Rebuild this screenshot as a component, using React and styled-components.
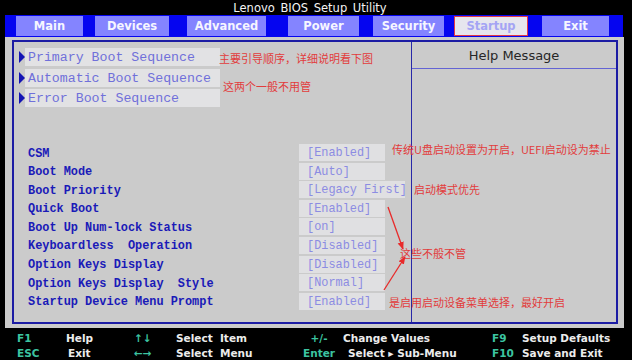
import React from "react";
import styled, { createGlobalStyle } from "styled-components";

const GlobalStyle = createGlobalStyle`
  html, body {
    margin: 0;
    padding: 0;
    background: #000;
  }
`;

const Screen = styled.div`
  position: relative;
  width: 632px;
  height: 360px;
  background: #000;
  display: flex;
  flex-direction: column;
  overflow: hidden;
`;

const TitleBar = styled.div`
  height: 15px;
  line-height: 17px;
  text-align: center;
  padding-right: 12px;
  color: #f4f4f4;
  font-family: "DejaVu Sans", sans-serif;
  font-size: 11.5px;
  word-spacing: 2px;
`;

const TabBar = styled.div`
  display: flex;
  height: 22px;
  margin: 0 9px 0 5px;
  padding: 1px 0 1px 11px;
  box-sizing: border-box;
  background: #0505f0;
`;

const Tab = styled.div`
  width: ${(p) => p.w}px;
  margin-left: ${(p) => p.ml}px;
  box-sizing: border-box;
  display: flex;
  align-items: center;
  justify-content: center;
  background: ${(p) => (p.active ? "#e6e6ee" : "#8484ff")};
  border: 1px solid ${(p) => (p.active ? "#e23848" : "#8484ff")};
  color: ${(p) => (p.active ? "#a4a4f4" : "#f6f6ff")};
  font-family: "DejaVu Sans", sans-serif;
  font-weight: bold;
  font-size: 11.5px;
`;

const MainPanel = styled.div`
  height: 291px;
  margin: 0 8px 0 5px;
  padding: 3px 6px 4px 7px;
  box-sizing: border-box;
  background: #cbcbcb;
`;

const Frame = styled.div`
  height: 100%;
  box-sizing: border-box;
  border: 2px solid #1c1ca4;
  display: grid;
  grid-template-columns: 398px 1fr;
`;

const LeftPane = styled.div`
  border-right: 1px solid #2828a8;
  padding: 6px 0 0 5px;
`;

const RightPane = styled.div`
  display: flex;
  flex-direction: column;
`;

const HelpHeader = styled.div`
  height: 26px;
  border-bottom: 1px solid #6464d4;
  display: flex;
  align-items: center;
  justify-content: center;
  color: #262626;
  font-family: "DejaVu Sans", sans-serif;
  font-size: 13px;
`;

const SubMenuList = styled.div`
  display: flex;
  flex-direction: column;
  gap: 2.5px;
`;

const SubMenuRow = styled.div`
  display: flex;
  align-items: center;
  height: 18px;
`;

const Pointer = styled.span`
  width: 0;
  height: 0;
  border-top: 6px solid transparent;
  border-bottom: 6px solid transparent;
  border-left: 6px solid #1414b4;
`;

const SubMenuLabel = styled.div`
  width: 195px;
  height: 18px;
  box-sizing: border-box;
  padding-left: 3px;
  background: #e2e2e4;
  color: #7070da;
  font-family: "Liberation Mono", monospace;
  font-size: 13.25px;
  line-height: 19px;
  white-space: pre;
`;

const SettingList = styled.div`
  margin-top: 37px;
  padding-left: 9px;
  display: flex;
  flex-direction: column;
  gap: 1.6px;
`;

const SettingRow = styled.div`
  display: grid;
  grid-template-columns: 271px auto;
  align-items: center;
  height: 17px;
  font-family: "Liberation Mono", monospace;
  font-size: 11.9px;
  white-space: pre;
`;

const SettingLabel = styled.div`
  color: #1a1ab8;
  font-weight: bold;
  padding-top: 2px;
`;

const SettingValue = styled.div`
  width: ${(p) => p.w}px;
  height: 17px;
  box-sizing: border-box;
  padding: 2px 0 0 8px;
  background: #e0e0e2;
  color: #8c8ce2;
`;

const Footer = styled.div`
  flex: 1;
  padding: 2px 0 0 17px;
  display: grid;
  grid-template-columns: 49px 68px 42px 120px 46px 150px 30px 1fr;
  grid-auto-rows: 15px;
  align-items: center;
  font-family: "DejaVu Sans", sans-serif;
  font-weight: bold;
  font-size: 10.5px;
  white-space: pre;
`;

const Key = styled.span`
  color: #3cc4a0;
  text-align: ${(p) => (p.center ? "center" : "left")};
`;

const Desc = styled.span`
  color: #ececec;
  padding-left: ${(p) => p.pl || 0}px;
`;

const Note = styled.div`
  position: absolute;
  left: ${(p) => p.x}px;
  top: ${(p) => p.y}px;
  color: #e23c3c;
  font-family: "Noto Sans CJK SC", sans-serif;
  font-size: 11px;
  line-height: 14px;
  white-space: nowrap;
`;

const ArrowLayer = styled.svg`
  position: absolute;
  left: 0;
  top: 0;
  pointer-events: none;
`;

const tabs = [
  { name: "Main", w: 67, ml: 0 },
  { name: "Devices", w: 74, ml: 12 },
  { name: "Advanced", w: 79, ml: 18 },
  { name: "Power", w: 71, ml: 22 },
  { name: "Security", w: 71, ml: 14 },
  { name: "Startup", w: 74, ml: 10, active: true },
  { name: "Exit", w: 67, ml: 14 },
];

const subMenus = [
  "Primary Boot Sequence",
  "Automatic Boot Sequence",
  "Error Boot Sequence",
];

const settings = [
  ["CSM", "[Enabled]"],
  ["Boot Mode", "[Auto]"],
  ["Boot Priority", "[Legacy First]", 106],
  ["Quick Boot", "[Enabled]"],
  ["Boot Up Num-lock Status", "[on]"],
  ["Keyboardless  Operation", "[Disabled]"],
  ["Option Keys Display", "[Disabled]"],
  ["Option Keys Display  Style", "[Normal]"],
  ["Startup Device Menu Prompt", "[Enabled]"],
];

const notes = [
  { x: 219, y: 51, text: "主要引导顺序，详细说明看下图" },
  { x: 223, y: 79, text: "这两个一般不用管" },
  { x: 392, y: 142, text: "传统U盘启动设置为开启，UEFI启动设为禁止" },
  { x: 414, y: 182, text: "启动模式优先" },
  { x: 400, y: 246, text: "这些不般不管" },
  { x: 389, y: 295, text: "是启用启动设备菜单选择，最好开启" },
];

function App() {
  return (
    <>
      <GlobalStyle />
      <Screen>
        <TitleBar>Lenovo BIOS Setup Utility</TitleBar>

        <TabBar>
          {tabs.map((t) => (
            <Tab key={t.name} w={t.w} ml={t.ml} active={t.active}>
              {t.name}
            </Tab>
          ))}
        </TabBar>

        <MainPanel>
          <Frame>
            <LeftPane>
              <SubMenuList>
                {subMenus.map((s) => (
                  <SubMenuRow key={s}>
                    <Pointer />
                    <SubMenuLabel>{s}</SubMenuLabel>
                  </SubMenuRow>
                ))}
              </SubMenuList>

              <SettingList>
                {settings.map(([label, value, w]) => (
                  <SettingRow key={label}>
                    <SettingLabel>{label}</SettingLabel>
                    <SettingValue w={w || 86}>{value}</SettingValue>
                  </SettingRow>
                ))}
              </SettingList>
            </LeftPane>

            <RightPane>
              <HelpHeader>Help Message</HelpHeader>
            </RightPane>
          </Frame>
        </MainPanel>

        <Footer>
          <Key>F1</Key>
          <Desc>Help</Desc>
          <Key>↑↓</Key>
          <Desc>Select  Item</Desc>
          <Key center>+/-</Key>
          <Desc pl={1}>Change Values</Desc>
          <Key>F9</Key>
          <Desc>Setup Defaults</Desc>

          <Key>ESC</Key>
          <Desc pl={2}>Exit</Desc>
          <Key>←→</Key>
          <Desc>Select  Menu</Desc>
          <Key center>Enter</Key>
          <Desc pl={6}>Select ▸ Sub-Menu</Desc>
          <Key>F10</Key>
          <Desc>Save and Exit</Desc>
        </Footer>

        {notes.map((n) => (
          <Note key={n.text} x={n.x} y={n.y}>
            {n.text}
          </Note>
        ))}

        <ArrowLayer width="632" height="360" viewBox="0 0 632 360">
          <defs>
            <marker
              id="head"
              viewBox="0 0 10 10"
              refX="9"
              refY="5"
              markerWidth="6"
              markerHeight="6"
              orient="auto"
            >
              <path d="M0 1 L10 5 L0 9 Z" fill="#e82a2a" />
            </marker>
          </defs>
          <line x1="388" y1="207" x2="403" y2="249" stroke="#e82a2a" strokeWidth="1.3" markerEnd="url(#head)" />
          <line x1="384" y1="290" x2="405" y2="257" stroke="#e82a2a" strokeWidth="1.3" markerEnd="url(#head)" />
        </ArrowLayer>
      </Screen>
    </>
  );
}

export default App;
